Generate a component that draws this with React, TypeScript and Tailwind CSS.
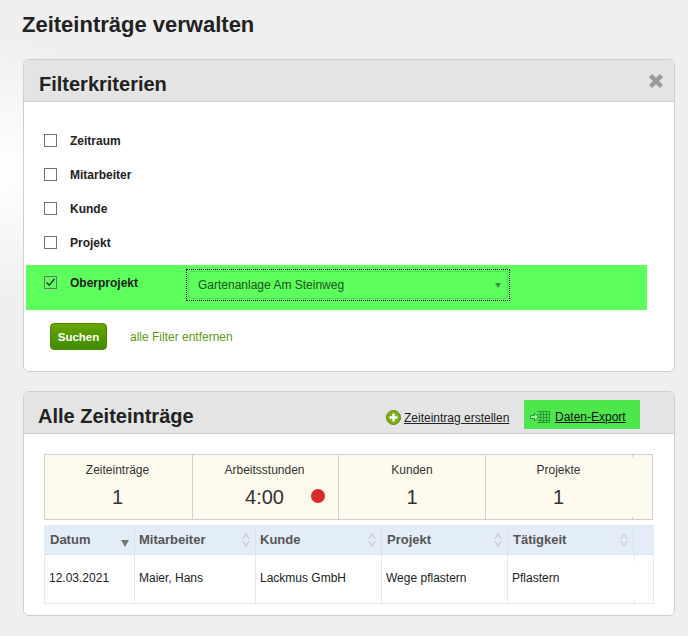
import React from "react";

const Sort = () => (
  <svg width="10" height="16" viewBox="0 0 10 16" className="shrink-0">
    <path d="M5 1 L9 7 H7.6 L5 3.2 L2.4 7 H1 Z M5 15 L9 9 H7.6 L5 12.8 L2.4 9 H1 Z" fill="#c9ced3" />
  </svg>
);

const Check = ({ checked = false }: { checked?: boolean }) => (
  <span className="w-[13px] h-[13px] border border-[#707070] bg-transparent flex items-center justify-center shrink-0 -translate-y-px">
    {checked && (
      <svg width="11" height="11" viewBox="0 0 11 11">
        <path d="M1.5 5.5 L4.2 8.2 L9.5 2" fill="none" stroke="#222" strokeWidth="1.2" />
      </svg>
    )}
  </span>
);

const FilterRow = ({ label }: { label: string }) => (
  <div className="h-[34px] flex items-center pl-[20px] gap-[13px]">
    <Check />
    <span className="text-[12px] font-bold text-[#222]">{label}</span>
  </div>
);

const Stat = ({ label, value, dot, w, last, pr = "pr-[2px]" }: { label: string; value: string; dot?: boolean; w: string; last?: boolean; pr?: string }) => (
  <div className={`${w} ${last ? "" : "border-r border-[#cfcfcf]"} h-full flex flex-col items-center pt-[7px] ${pr} relative`}>
    <span className="text-[12px] leading-[16px] text-[#333]">{label}</span>
    <span className="text-[20px] leading-[24px] mt-[7px] text-[#333]">{value}</span>
    {dot && <span className="absolute left-[118px] top-[34px] w-[14px] h-[14px] rounded-full bg-[#d92b2b]" />}
  </div>
);

const Head = ({ label, sort = true, desc = false, pl = "pl-[5px]" }: { label: string; sort?: boolean; desc?: boolean; pl?: string }) => (
  <div className={`border-r border-[#d8e3ee] flex items-center justify-between ${pl} pr-[4px] text-[13px] font-bold text-[#555]`}>
    <span className="-mt-px">{label}</span>
    {sort && <Sort />}
    {desc && (
      <svg width="8" height="7" viewBox="0 0 8 7" className="mt-[6px] mr-[1px]">
        <path d="M0 0 H8 L4 7 Z" fill="#777" />
      </svg>
    )}
  </div>
);

const Cell = ({ text, pad = "pl-[4px]" }: { text: string; pad?: string }) => (
  <div className={`border-r border-[#e2eaf2] ${pad} pt-[14px] text-[12px] text-[#222]`}>{text}</div>
);

export default function App() {
  return (
    <div className="w-[688px] h-[636px] overflow-hidden bg-[#efefef] bg-[radial-gradient(circle_at_0px_170px,#ffffff_0px,#efefef_130px)] pt-[11px] pl-[23px] font-['Liberation_Sans',Arial,sans-serif]">
      <h1 className="text-[22px] leading-[28px] font-bold text-[#222] -ml-px">Zeiteinträge verwalten</h1>

      <section className="mt-[20px] w-[652px] h-[313px] bg-white border border-[#cfcfcf] rounded-[6px] overflow-hidden">
        <header className="h-[42px] bg-[#e4e4e4] border-b border-[#cfcfcf] flex items-center justify-between pl-[15px] pr-[9px]">
          <h2 className="text-[20px] font-bold text-[#222] mt-[6px]">Filterkriterien</h2>
          <svg width="18" height="18" viewBox="0 0 18 18">
            <path d="M3.5 3.5 L14.5 14.5 M14.5 3.5 L3.5 14.5" stroke="#999" strokeWidth="4.4" />
          </svg>
        </header>
        <div className="pt-[22px]">
          <FilterRow label="Zeitraum" />
          <FilterRow label="Mitarbeiter" />
          <FilterRow label="Kunde" />
          <FilterRow label="Projekt" />
          <div className="mt-[5px] ml-[2px] w-[621px] h-[45px] bg-[#5cff5c] flex items-start pl-[18px] pt-[4px]">
            <div className="flex items-center gap-[13px] w-[142px] h-[22px] mt-[3px]">
              <Check checked />
              <span className="text-[12px] font-bold text-[#1f1f1f]">Oberprojekt</span>
            </div>
            <div className="w-[324px] h-[32px] border border-dotted border-black p-[1px]">
              <div className="h-full border border-[#50e050] rounded-[3px] flex items-center justify-between pl-[9px] pr-[6px]">
                <span className="text-[12px] text-[#1f4f1f]">Gartenanlage Am Steinweg</span>
                <svg width="6" height="5" viewBox="0 0 6 5">
                  <path d="M0 0 H6 L3 5 Z" fill="#3a8f48" />
                </svg>
              </div>
            </div>
          </div>
          <div className="mt-[13px] pl-[26px] flex items-center gap-[23px]">
            <button className="w-[57px] h-[27px] pt-[2px] rounded-[4px] border border-[#4a8a00] bg-gradient-to-b from-[#66a800] to-[#3f8a00] text-white text-[11.5px] font-bold">
              Suchen
            </button>
            <a className="text-[12px] text-[#5f9a10]">alle Filter entfernen</a>
          </div>
        </div>
      </section>

      <section className="mt-[19px] w-[652px] h-[225px] bg-white border border-[#cfcfcf] rounded-[6px] overflow-hidden">
        <header className="h-[42px] bg-[#e4e4e4] border-b border-[#cfcfcf] flex items-center pl-[14px]">
          <h2 className="text-[20px] font-bold text-[#222] w-[348px] mt-[6px]">Alle Zeiteinträge</h2>
          <a className="flex items-center gap-[3px] text-[12px] text-[#222] underline w-[138px] mt-[10px]">
            <svg width="15" height="15" viewBox="0 0 15 15" className="shrink-0">
              <circle cx="7.5" cy="7.5" r="7" fill="#7fae12" stroke="#5f8a0c" />
              <path d="M7.5 3.5 V11.5 M3.5 7.5 H11.5" stroke="#fff" strokeWidth="2.4" />
            </svg>
            Zeiteintrag erstellen
          </a>
          <div className="w-[116px] h-[29px] bg-[#4de64d] flex items-center pl-[6px] pt-[5px] gap-[5px] mt-[4px]">
            <svg width="20" height="14" viewBox="0 0 20 14" className="shrink-0">
              <path d="M7.5 1.5 H19.5 V12.5 H7.5 M10.5 1.5 V12.5 M13.5 1.5 V12.5 M16.5 1.5 V12.5 M7.5 4.5 H19.5 M7.5 7.5 H19.5 M7.5 10.5 H19.5" fill="none" stroke="#2a9a38" />
              <path d="M0.5 5.5 H4.5 V3 L8.5 7 L4.5 11 V8.5 H0.5 Z" fill="#a8f0a8" stroke="#2a9a38" />
            </svg>
            <span className="text-[12px] text-[#111] underline">Daten-Export</span>
          </div>
        </header>
        <div className="pt-[20px] pl-[20px]">
          <div className="w-[609px] h-[66px] bg-[#fffaee] border border-[#cfcfcf] flex items-stretch relative">
            <Stat w="w-[148px]" label="Zeiteinträge" value="1" />
            <Stat w="w-[146px]" label="Arbeitsstunden" value="4:00" dot />
            <Stat w="w-[147px]" label="Kunden" value="1" pr="pr-0" />
            <Stat w="w-[147px]" label="Projekte" value="1" last pr="pr-[2px]" />
            <span className="absolute left-[587px] top-0 w-px h-[2px] bg-[#cfcfcf]" />
            <span className="absolute left-[587px] bottom-0 w-px h-[2px] bg-[#cfcfcf]" />
          </div>
          <div className="mt-[5px] w-[610px] h-[79px] border border-[#e2eaf2] grid grid-cols-[90px_121px_126px_126px_126px_1fr] grid-rows-[29px_1fr] relative">
            <div className="col-span-6 grid grid-cols-subgrid bg-[#e3edf7] border-b border-[#d8e3ee]">
              <Head label="Datum" sort={false} desc />
              <Head label="Mitarbeiter" pl="pl-[4px]" />
              <Head label="Kunde" pl="pl-[4px]" />
              <Head label="Projekt" />
              <Head label="Tätigkeit" />
              <div />
            </div>
            <Cell text="12.03.2021" />
            <Cell text="Maier, Hans" />
            <Cell text="Lackmus GmbH" />
            <Cell text="Wege pflastern" />
            <div className="pl-[4px] pt-[14px] text-[12px] text-[#222]">Pflastern</div>
            <div />
            <span className="absolute left-[589px] top-[29px] w-px h-[6px] bg-[#e2eaf2]" />
            <span className="absolute left-[589px] bottom-0 w-px h-[3px] bg-[#e2eaf2]" />
          </div>
        </div>
      </section>
    </div>
  );
}
